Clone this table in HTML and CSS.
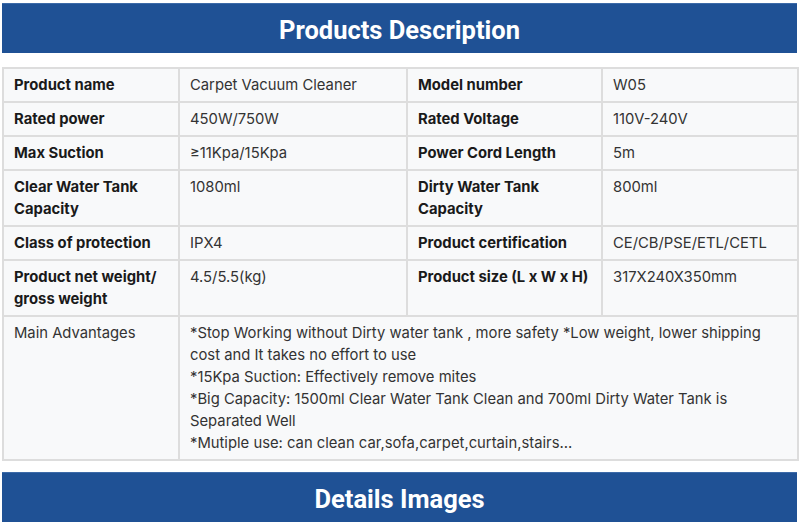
FILE: index.html
```html
<!DOCTYPE html>
<html>
<head>
<meta charset="utf-8">
<link rel="stylesheet" href="styles.css">
</head>
<body>
<div class="page">
  <h2 class="banner">Products Description</h2>
  <table class="spec">
    <colgroup>
      <col class="c1"><col class="c2"><col class="c3"><col class="c4">
    </colgroup>
    <tr><th>Product name</th><td>Carpet Vacuum Cleaner</td><th>Model number</th><td>W05</td></tr>
    <tr><th>Rated power</th><td>450W/750W</td><th>Rated Voltage</th><td>110V-240V</td></tr>
    <tr><th>Max Suction</th><td>≥11Kpa/15Kpa</td><th>Power Cord Length</th><td>5m</td></tr>
    <tr><th>Clear Water Tank Capacity</th><td>1080ml</td><th>Dirty Water Tank Capacity</th><td>800ml</td></tr>
    <tr><th>Class of protection</th><td>IPX4</td><th>Product certification</th><td>CE/CB/PSE/ETL/CETL</td></tr>
    <tr><th>Product net weight/ gross weight</th><td>4.5/5.5(kg)</td><th>Product size (L x W x H)</th><td>317X240X350mm</td></tr>
    <tr class="adv"><td>Main Advantages</td><td colspan="3">*Stop Working without Dirty water tank , more safety *Low weight, lower shipping cost and It takes no effort to use<br>*15Kpa Suction: Effectively remove mites<br>*Big Capacity: 1500ml Clear Water Tank Clean and 700ml Dirty Water Tank is Separated Well<br>*Mutiple use: can clean car,sofa,carpet,curtain,stairs...</td></tr>
  </table>
  <h2 class="banner">Details Images</h2>
</div>
</body>
</html>
```
FILE: styles.css
```css
html, body {
  margin: 0;
  padding: 0;
  background: #ffffff;
}
.page {
  padding: 3px 3px 0 2px;
  font-family: "Inter", "Liberation Sans", sans-serif;
}
.banner {
  margin: 0;
  height: 50px;
  background: #1f5195;
  border-top: 1px solid #3c6aa8;
  box-sizing: border-box;
  color: #ffffff;
  font-family: "Roboto", "Liberation Sans", sans-serif;
  font-weight: 700;
  font-size: 25.5px;
  line-height: 52px;
  text-align: center;
}
.spec {
  width: 100%;
  margin: 14px 0 11px;
  border-collapse: collapse;
  table-layout: fixed;
  background: #f8f9fa;
  font-size: 14.8px;
  line-height: 22px;
  color: #2a2a2a;
}
.c1 { width: 176px; }
.c2 { width: 228px; }
.c3 { width: 195px; }
.c4 { width: 196px; }
.spec th, .spec td {
  border: 2px solid #dddddd;
  padding: 5px 4px 5px 10px;
  text-align: left;
  vertical-align: top;
}
.spec th {
  font-weight: 700;
  color: #1a1a1a;
}
.spec td {
  font-weight: 400;
  color: #333333;
}
```
